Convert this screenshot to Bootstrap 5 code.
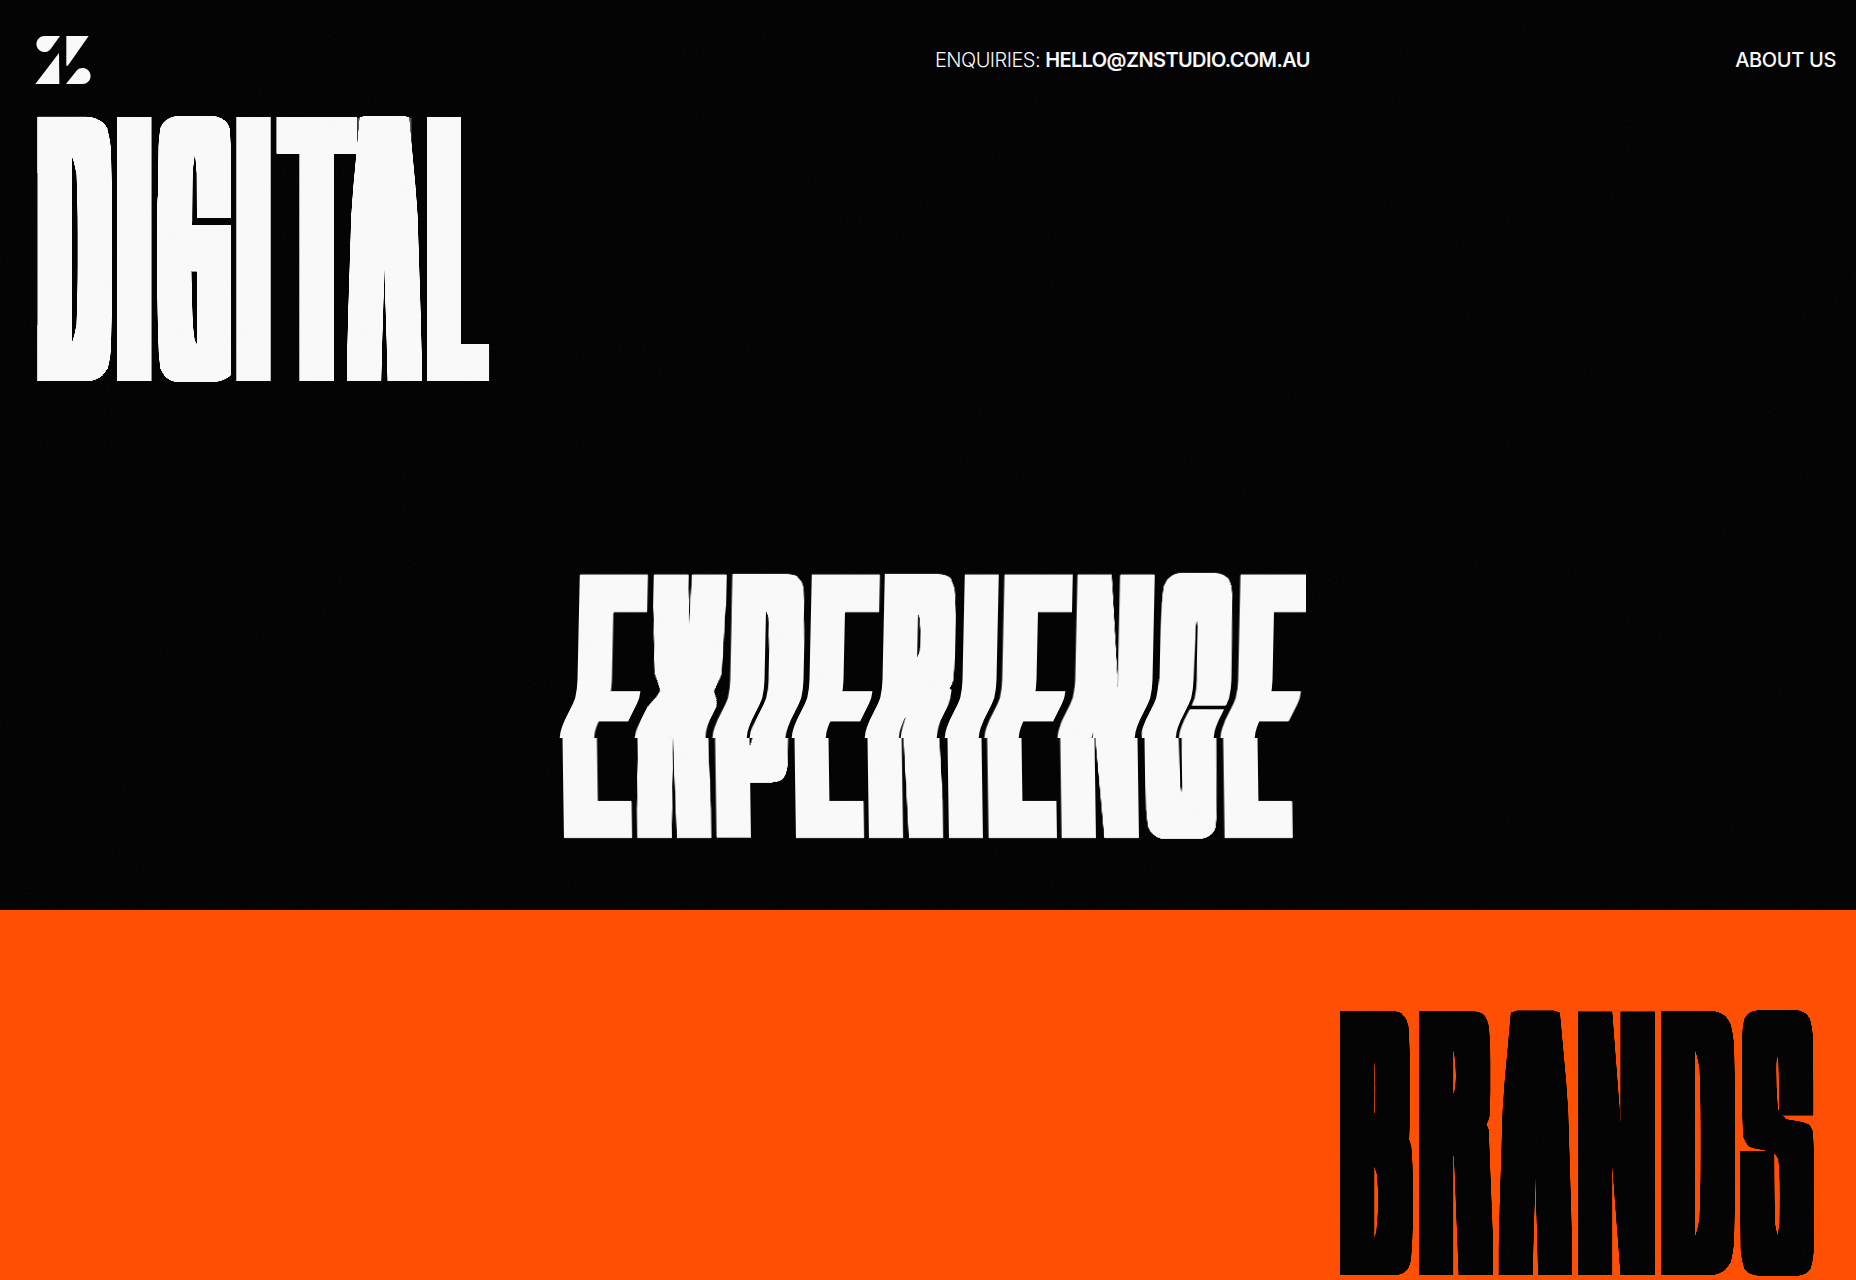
<!DOCTYPE html>
<html lang="en">
<head>
<meta charset="utf-8">
<meta name="viewport" content="width=device-width, initial-scale=1">
<title>ZN Studio</title>
<link href="https://cdn.jsdelivr.net/npm/bootstrap@5.3.0/dist/css/bootstrap.min.css" rel="stylesheet">
<style>
  body { background: #020202; font-family: Inter, "Liberation Sans", sans-serif; }
  .stage { height: 1280px; }
  .hero-dark { height: 910px; background: #020202; }
  .hero-orange { background: #ff4e00; }
  .topbar { height: 110px; padding: 36px 20px 0 35px; color: #fafafa; font-size: 20px; line-height: 24px; }
  .topbar a { color: inherit; text-decoration: none; }
  .enquiry { margin: 12px 0 0 844px; letter-spacing: -.53px; font-weight: 350; white-space: nowrap; }
  .enquiry a { font-weight: 600; letter-spacing: -.6px; }
  .about { margin-top: 12px; font-weight: 500; letter-spacing: -.35px; white-space: nowrap; }
  .display-word { display: block; flex: none; overflow: hidden; }
  .display-word text { font-family: Roboto, "Liberation Sans", sans-serif; font-weight: 100; }
  .w-one { margin-left: 36px; }
  .w-two { margin: 175px 0 0 550px; }
  .w-three { margin: 95px 36px 0 0; }
  .grain { inset: 0; opacity: .035; pointer-events: none; }
</style>
<script src="https://cdn.jsdelivr.net/npm/bootstrap@5.3.0/dist/js/bootstrap.bundle.min.js"></script>
</head>
<body>
<main class="stage d-flex flex-column position-relative overflow-hidden">
  <section class="hero-dark d-flex flex-column align-items-start">
    <header class="topbar d-flex align-items-start w-100">
      <a href="#" aria-label="Home">
        <svg class="d-block" width="56" height="48" viewBox="45 48 168 144" fill="#fafafa">
          <path d="M120 48H73A24 24 0 1 0 92 87Z"/>
          <path d="M117 99L118 192H46Z"/>
          <path d="M139 48H206L145 135Q139 141 139 135Z"/>
          <path d="M138 192H188A24 24 0 1 0 169 153Z"/>
        </svg>
      </a>
      <div class="enquiry">ENQUIRIES: <a href="#">HELLO@ZNSTUDIO.COM.AU</a></div>
      <a class="about ms-auto" href="#">ABOUT US</a>
    </header>

    <svg class="display-word w-one" width="464" height="280" viewBox="36 110 464 280" fill="#fafafa">
      <defs>
        <filter id="widen" filterUnits="userSpaceOnUse" x="0" y="0" width="1856" height="1300" color-interpolation-filters="sRGB">
          <feMorphology operator="dilate" radius="16 14"/>
          <feComponentTransfer><feFuncA type="linear" slope="2.2" intercept="-.5"/></feComponentTransfer>
        </filter>
      </defs>
      <g filter="url(#widen)"><text id="digital" data-top="117.3" data-bottom="380.7" data-edges="37.6,112 116.9,152.2 157.2,231.5 236.2,271.2 275.9,357 347.5,422.3 426.9,489.7">DIGITAL</text></g>
    </svg>

    <svg class="display-word w-two" id="wave" width="756" height="290" viewBox="550 565 756 290" fill="#fafafa">
      <g id="wave-word" filter="url(#widen)"><text id="experience" data-top="574.7" data-bottom="838" data-edges="564.3,632 637,711.7 716.7,790.7 796,864 869.3,943.7 948.7,983.7 988.7,1056.7 1061.7,1139.7 1145,1218.3 1224.7,1292.3">EXPERIENCE</text></g>
    </svg>
  </section>

  <section class="hero-orange d-flex flex-grow-1 justify-content-end align-items-start">
    <svg class="display-word w-three" width="490" height="275" viewBox="1330 1005 490 275" fill="#020202">
      <g filter="url(#widen)"><text id="brands" data-top="1011.7" data-bottom="1274.7" data-edges="1340,1413.7 1419.3,1493.3 1499,1572.7 1578,1655.7 1661,1735 1740.5,1814.6">BRANDS</text></g>
    </svg>
  </section>

  <svg class="grain position-absolute w-100 h-100" aria-hidden="true">
    <filter id="noise"><feTurbulence type="fractalNoise" baseFrequency=".55" numOctaves="2"/><feColorMatrix type="saturate" values="0"/></filter>
    <rect width="100%" height="100%" filter="url(#noise)"/>
  </svg>
</main>

<script>
  // Letters are set thin, fitted between their edges, stretched band by band, then widened by the filter.
  const RX = 15.6, RY = 13.8, NS = 'http://www.w3.org/2000/svg';
  const el = (name, attrs = {}, parent) => {
    const e = document.createElementNS(NS, name);
    for (const k in attrs) e.setAttribute(k, attrs[k]);
    if (parent) parent.append(e);
    return e;
  };
  // Vertical stretch of each letter: [height in the font, height on the page], both as parts of the cap height.
  const stretch = {
    D: [[0,0],[.04,.01],[.1,.025],[.18,.05],[.3,.12],[.7,.88],[.82,.95],[.9,.975],[.96,.99],[1,1]],
    G: [[0,0],[.04,.01],[.1,.025],[.18,.05],[.25,.12],[.272,.32],[.55,.464],[.75,.88],[.82,.95],[.9,.975],[.96,.99],[1,1]],
    C: [[0,0],[.04,.01],[.1,.025],[.18,.05],[.25,.12],[.3,.435],[.7,.578],[.75,.88],[.82,.95],[.9,.975],[.96,.99],[1,1]],
    S: [[0,0],[.04,.01],[.1,.03],[.2,.1],[.28,.32],[.34,.42],[.42,.455],[.58,.48],[.66,.51],[.73,.61],[.8,.9],[.9,.97],[.96,.99],[1,1]],
    A: [[0,-.004],[.38,.006],[.7,.3],[.8,.42],[.95,.83],[1,1]],
    X: [[0,0],[.07,.3],[.3,.4],[.5,.44],[.7,.48],[.93,.56],[1,1]],
    N: [[0,0],[.2,.48],[.8,.52],[1,1]],
    E: [[0,0],[.44,.49],[.52,.51],[1,1]],
    P: [[0,0],[.05,.01],[.09,.025],[.16,.06],[.4,.69],[.47,.73],[.52,.75],[.56,.76],[1,1]],
    R: [[0,0],[.05,.01],[.09,.025],[.16,.06],[.38,.33],[.46,.36],[.54,.385],[.62,.4],[.88,.5],[1,1]],
    B: [[0,0],[.04,.01],[.08,.025],[.14,.06],[.34,.43],[.42,.48],[.48,.5],[.54,.52],[.62,.57],[.86,.94],[.92,.975],[.96,.99],[1,1]]
  };
  const ctx = document.createElement('canvas').getContext('2d');
  document.querySelectorAll('text[data-edges]').forEach(t => {
    const top = +t.dataset.top + RY, bottom = +t.dataset.bottom - RY, cap = bottom - top;
    const size = cap / .711, holder = t.parentNode, svg = holder.closest('svg');
    ctx.font = '100 ' + size + 'px Roboto';
    const chars = [...t.textContent];
    const edges = t.dataset.edges.split(' ').map(p => p.split(',').map(Number));
    t.textContent = '';
    t.setAttribute('font-size', size);
    chars.forEach((c, i) => {
      const m = ctx.measureText(c);
      const s = (edges[i][1] - edges[i][0] - 2 * RX) / (m.actualBoundingBoxRight + m.actualBoundingBoxLeft);
      el('tspan', { x: edges[i][0] + RX + m.actualBoundingBoxLeft * s, y: bottom, textLength: m.width * s, lengthAdjust: 'spacingAndGlyphs' }, t).textContent = c;
    });
    let placed = false;
    chars.forEach((c, i) => {
      const map = stretch[c] || [[0,0],[1,1]];
      for (let j = 1; j < map.length; j++) {
        const [u0, v0] = map[j - 1], [u1, v1] = map[j], k = (v1 - v0) / (u1 - u0);
        const a = top + u0 * cap - (j === 1 ? 8 : 0), b = top + u1 * cap + (j === map.length - 1 ? 8 : 0);
        const id = `${t.id}-${i}-${j}`;
        el('rect', { x: edges[i][0], y: a, width: edges[i][1] - edges[i][0], height: b - a }, el('clipPath', { id }, svg));
        const g = el('g', { transform: `matrix(1 0 0 ${k} 0 ${top + v0 * cap - k * (top + u0 * cap)})` }, holder);
        const cell = el('g', { 'clip-path': `url(#${id})` }, g);
        if (placed) el('use', { href: '#' + t.id }, cell); else cell.append(t);
        placed = true;
      }
    });
  });

  // Horizontal bands, each sheared between two offsets, give the wave.
  const bands = [[565,680,16,13.5],[680,689,13.5,12.8],[689,698,12.8,11.2],[698,704,11.2,8.8],[704,720,8.8,.8],[720,727,.8,-2],[727,732,-2,-3.5],[732,738,-3.5,-4.3],[738,855,-1.5,.2]];
  const wave = document.getElementById('wave'), word = document.getElementById('wave-word');
  bands.forEach(([y0, y1, a, b], i) => {
    el('rect', { x: 540, y: y0, width: 780, height: y1 - y0 }, el('clipPath', { id: 'band' + i }, wave));
    const g = el('g', { 'clip-path': `url(#band${i})` }, wave);
    const k = (b - a) / (y1 - y0);
    const inner = el('g', { transform: `matrix(1 0 ${k} 1 ${a - k * y0} 0)` }, g);
    if (i) el('use', { href: '#wave-word' }, inner); else inner.append(word);
  });
</script>
</body>
</html>
